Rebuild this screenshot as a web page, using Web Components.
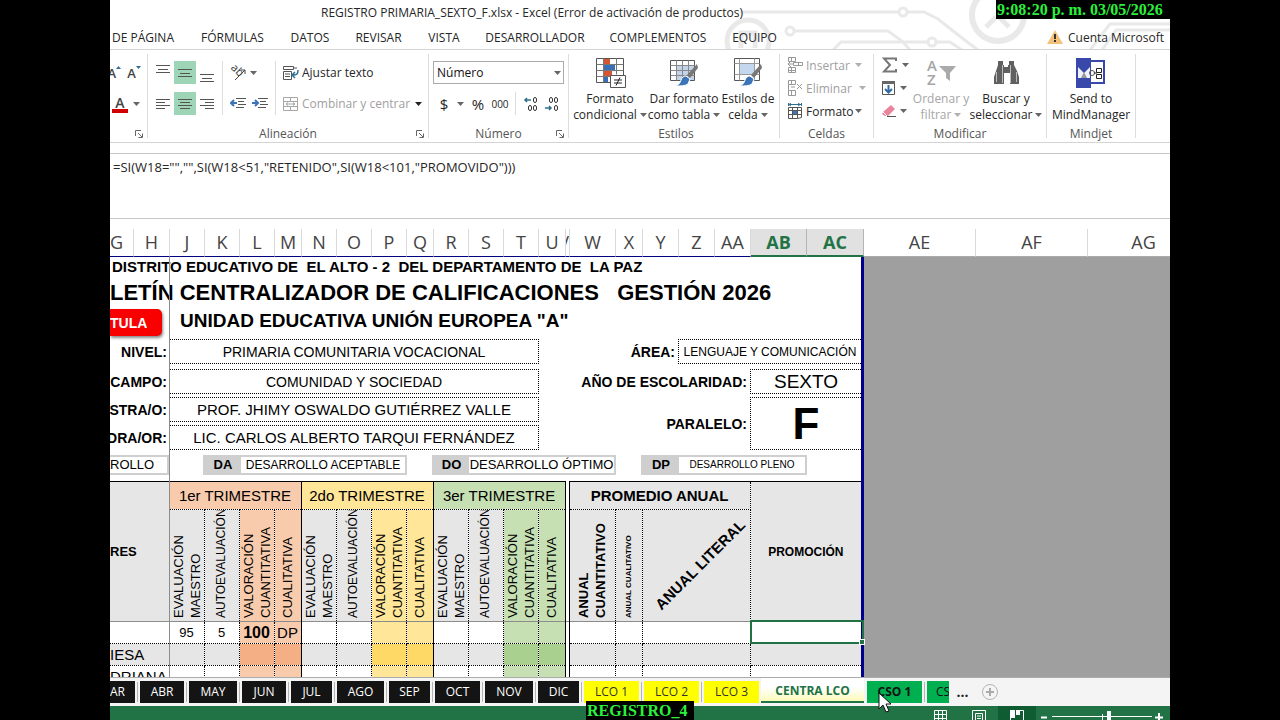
<!DOCTYPE html>
<html lang="es">
<head>
<meta charset="utf-8">
<title>REGISTRO PRIMARIA_SEXTO_F.xlsx - Excel</title>
<style>
  html, body { margin: 0; height: 100%; background: #000; }
  body { font-family: "Open Sans", "Noto Sans", sans-serif; font-size: 12px; color: #262626; }
</style>
</head>
<body>
<excel-app></excel-app>
<script>
const define = (name, html, setup) => {
  const template = document.createElement('template');
  template.innerHTML = '<style>*{box-sizing:border-box}button,select,textarea{font:inherit;color:inherit;border:0;background:none;padding:0;margin:0}a{color:inherit;text-decoration:none}i{font-style:normal}svg{display:block;flex:none}</style>' + html;
  customElements.define(name, class extends HTMLElement {
    constructor() {
      super();
      this.attachShadow({ mode: 'open' }).append(template.content.cloneNode(true));
    }
    connectedCallback() { if (setup) setup(this, this.shadowRoot); }
  });
};

/* ---------- icons ---------- */
const lines = (rows) => rows.map(([x1, x2, y]) => `<path d="M${x1} ${y}.5H${x2}"/>`).join('');
const svg = (w, h, body, extra = '') => `<svg width="${w}" height="${h}" viewBox="0 0 ${w} ${h}" fill="none" stroke="#555" ${extra}>${body}</svg>`;
const brush = '<path d="M29 7L19 18l3 3L30 11z" fill="#777" stroke="none"/><path d="M18 19l4 3-2 5c-3 2-7 2-13 2 4-1 5-3 6-6 1-3 3-4 5-4z" fill="#3b74b9" stroke="#fff"/>';
const zero = (x, y) => `<ellipse cx="${x}" cy="${y}" rx="1.600" ry="2.600" stroke="#333"/>`;
const icons = {
  arrow: svg(7, 4, '<path d="M0 0h7L3.500 4z" fill="#666" stroke="none"/>'),
  arrowdark: svg(7, 4, '<path d="M0 0h7L3.500 4z" fill="#222" stroke="none"/>'),
  arrowoff: svg(7, 4, '<path d="M0 0h7L3.500 4z" fill="#b0b0b0" stroke="none"/>'),
  top: svg(14, 22, lines([[0, 14, 3], [2, 12, 7], [0, 14, 10]])),
  middle: svg(14, 22, lines([[0, 14, 7], [2, 12, 11], [0, 14, 14]])),
  bottom: svg(14, 22, lines([[0, 14, 12], [2, 12, 16], [0, 14, 19]])),
  left: svg(14, 22, lines([[0, 14, 6], [0, 9, 9], [0, 14, 12], [0, 9, 15]])),
  center: svg(14, 22, lines([[0, 14, 6], [2, 12, 9], [0, 14, 12], [2, 12, 15]])),
  right: svg(14, 22, lines([[0, 14, 6], [5, 14, 9], [0, 14, 12], [5, 14, 15]])),
  orient: svg(16, 16, '<g transform="rotate(45 6 6)"><text x="0" y="8" font-size="11" fill="#333" stroke="none">ab</text></g><path d="M5 15L15 5M15 5v4M15 5h-4" stroke="#444"/>'),
  outdent: svg(16, 14, lines([[6, 16, 1], [8, 14, 4], [8, 16, 7], [6, 14, 10]]) + '<path d="M7 6H1M4 3L1 6l3 3" stroke="#3b74b9" stroke-width="2"/>'),
  indent: svg(16, 14, lines([[6, 16, 1], [8, 14, 4], [8, 16, 7], [6, 14, 10]]) + '<path d="M0 6h6M3 3l3 3-3 3" stroke="#3b74b9" stroke-width="2"/>'),
  wrap: svg(16, 16, '<path d="M.5 1.500h10v3H.5zM.5 6.500h8v8H.5zM2 9h5M2 11.500h5M10 3h4"/><path d="M15 5c0 4-1 5-5 5M12 7l-3 3 3 3" stroke="#2f6e8f" stroke-width="1.500"/>'),
  merge: svg(16, 16, '<path d="M.5 1.500h14v13H.5zM.5 5.500h14M.5 10.500h14M7.500 1.500v4M7.500 10.500v4M3 8h9M5 6.500L3 8l2 1.500M10 6.500L12 8l-2 1.500" stroke="#a6a6a6"/>'),
  decplus: svg(16, 16, zero(12, 4) + zero(7, 12) + zero(12, 12) + '<path d="M8 4H2M4 2L2 4l2 2" stroke="#2f6e8f" stroke-width="1.500"/>'),
  decminus: svg(16, 16, zero(7, 4) + zero(12, 4) + zero(12, 12) + '<path d="M1 12h6M5 10l2 2-2 2" stroke="#2f6e8f" stroke-width="1.500"/>'),
  launch: svg(8, 8, '<path d="M.5 6V.5H6M3 3l4 4M7.500 3.500v4h-4" stroke="#666"/>'),
  cond: svg(32, 32, '<path d="M2.500 1.500h27v24h-27z" fill="#fff"/><path d="M10 2h6v5h-6zM10 14h8v5h-8z" fill="#d65532" stroke="none"/><path d="M10 8h11v5H10zM10 20h4v5h-4z" fill="#3b6fb5" stroke="none"/><path d="M2.500 7.500h27M2.500 13.500h27M2.500 19.500h14M9.500 1.500v24M22.500 1.500v16" stroke="#777"/><path d="M16.500 18.500h15v12h-15z" fill="#fff"/><path d="M20 23h8M20 26h8M26 20.500l-4 8" stroke="#222"/>'),
  table: svg(32, 32, '<path d="M2.500 3.500h24v20h-24z" fill="#fff"/><path d="M9 9h17v14H9z" fill="#c3d3ea" stroke="none"/><path d="M2.500 8.500h24M2.500 13.500h24M2.500 18.500h24M8.500 3.500v20M14.500 3.500v20M20.500 3.500v20" stroke="#888"/>' + brush),
  style: svg(32, 32, '<path d="M2.500 1.500h25v22h-25z" fill="#fff"/><path d="M8 7h14v10H8z" fill="#c3d7ee" stroke="none"/><path d="M2.500 6.500h25M2.500 17.500h25M7.500 1.500v22M22.500 1.500v22" stroke="#999"/>' + brush),
  insert: svg(16, 16, '<path d="M1.500.5h7v4h-7zM4.500.5v4M1.500 10.500h7v5h-7zM4.500 10.500v5M1.500 13.500h7M6.500 5.500h9v3h-9zM11.500 5.500v3M1 7h6M4 4L1 7l3 3" stroke="#999"/>'),
  remove: svg(16, 16, '<path d="M1.500.5h7v4h-7zM4.500.5v4M1.500 10.500h7v5h-7zM4.500 10.500v5M1.500 4.500v6M4 7h4M10 4l5 5M15 4l-5 5" stroke="#999"/>'),
  format: svg(16, 16, '<path d="M1.500 4.500h13v10l-4 1h-9zM1.500 7.500h13M1.500 11.500h13M5.500 4.500v11M10.500 4.500v11"/><path d="M6 8h4v3H6z" fill="#3b74b9" stroke="none"/><path d="M1 1.500h13M1.500 0v3M14.500 0v3M4 0L2 1.500 4 3M11 0l2 1.500L11 3" stroke="#2f6e8f"/>'),
  sigma: svg(16, 16, '<path d="M14 4V1.500H2L8 8l-6 6.500h12V12" stroke="#777" stroke-width="2"/>'),
  fill: svg(16, 16, '<path d="M1.500 1.500h12v13h-12z" fill="#fff"/><path d="M1 1h13v3H1z" fill="#666" stroke="none"/><path d="M7.500 5v7M4 9l3.500 3.500L11 9" stroke="#2f6ca5" stroke-width="2"/>'),
  erase: svg(16, 16, '<path d="M2 9l8-7 4 4-7 7H4L1 11z" fill="#e8849b" stroke="none"/><path d="M2 9l4 4" stroke="#fff"/><path d="M6 13.500h9"/>'),
  sort: svg(32, 32, '<path d="M14 9h17l-6 7v8l-4-3v-5z" fill="#aaa" stroke="none"/><text x="2" y="14" font-size="15" font-weight="600" fill="#a6a6a6" stroke="none">A</text><text x="2" y="28" font-size="15" font-weight="600" fill="#a6a6a6" stroke="none">Z</text>'),
  find: svg(32, 32, '<path d="M8 4h5v4h1v2h4V8h1V4h5v4l3 6 2 6v7h-9V16h-6v11H4v-7l2-6 2-6z" fill="#606060" stroke="none"/><path d="M12.500 8v18M20.500 8v18M6.500 15v10M26.500 15v10" stroke="#bbb"/>'),
  mind: svg(32, 32, '<path d="M14 4h15v22H14z" fill="#fff" stroke="#3949ab" stroke-width="2"/><path d="M1 1h15v30H1z" fill="#3949ab" stroke="none"/><path d="M3 10l6 6v5H3zM15 10l-6 6v5h6z" fill="#eef1ff" stroke="none"/><path d="M9 15l-3 6h6z" fill="#999" stroke="none"/><circle cx="17" cy="16" r="2.500"/><path d="M21.500 11.500h5v4h-5zM21.500 17.500h5v4h-5zM19 16h3" stroke="#222"/>'),
  warn: svg(16, 15, '<path d="M8 0l8 14H0z" fill="#f3c179" stroke="none"/><path d="M8 4v5M8 10v2" stroke="#333" stroke-width="2"/>'),
  gridview: svg(14, 14, '<path d="M.5.5h12v13M.5.5v13M4.500.5v13M8.500.5v13M.5 4.500h12M.5 8.500h12M.5 12.500h12" stroke="#fff"/>'),
  pageview: svg(14, 14, '<path d="M.5 14V.5h13V14M3.500 14V3.500h7V14M5 6h4M5 8.500h4M5 11h4" stroke="#fff"/>'),
  breakview: svg(14, 14, '<path d="M0 0h5v8H0zM6 0h4v5H6z" fill="#fff" stroke="none"/><path d="M.5 13.500V8M10 .5h3.500v13H.5" stroke="#fff"/>'),
  plus: svg(16, 16, '<circle cx="8" cy="8" r="7.500" stroke="#b4b4b4"/><path d="M8 4v8M4 8h8" stroke="#aaa" stroke-width="2"/>'),
  pointer: svg(14, 22, '<path d="M1 1v16l4-4 3 7 3-1-3-7h5z" fill="#fff" stroke="#111"/>')
};
const drawIcons = (host, root) => root.querySelectorAll('i[name]').forEach(n => { n.innerHTML = icons[n.getAttribute('name')]; });

/* ---------- application frame ---------- */
define('excel-app', `
<style>
  :host { display: flex; flex-direction: column; height: 100vh; margin: 0 110px; background: #fff; position: relative; overflow: hidden; }
  sheet-view { flex: 1; min-height: 0; }
  screen-note { position: absolute; }
  .clock { right: 0; top: 0; width: 174px; }
  .name { left: 476px; bottom: 0; width: 108px; }
  mouse-pointer { position: absolute; left: 768px; bottom: 6px; }
</style>
<title-area></title-area>
<ribbon-bar></ribbon-bar>
<formula-bar></formula-bar>
<column-heads></column-heads>
<sheet-view></sheet-view>
<sheet-tabs></sheet-tabs>
<status-bar></status-bar>
<screen-note class="clock">9:08:20 p. m. 03/05/2026</screen-note>
<screen-note class="name">REGISTRO_4</screen-note>
<mouse-pointer></mouse-pointer>`);

define('screen-note', `
<style>
  :host { display: block; background: #000; color: #2bf03c; font: bold 16px/19px "Liberation Serif", serif; padding-left: 1px; height: 19px; white-space: nowrap; }
</style><slot></slot>`);

define('mouse-pointer', `<style>:host{display:block}</style><i name="pointer"></i>`, drawIcons);

/* ---------- title and ribbon tabs ---------- */
define('title-area', `
<style>
  :host { display: block; position: relative; height: 50px; border-bottom: 1px solid #d4d4d4; overflow: hidden; flex: none; }
  .art { position: absolute; right: 0; top: 0; }
  .title { position: relative; height: 25px; line-height: 26px; margin-left: 202px; width: 440px; text-align: center; white-space: nowrap; }
  nav { position: relative; display: flex; height: 24px; line-height: 25px; }
  nav a { flex: none; text-align: center; white-space: nowrap; }
  nav a:first-child { display: flex; justify-content: flex-end; padding-right: 13px; }
  nav .account { display: flex; align-items: center; gap: 5px; margin-left: auto; padding-right: 6px; }
</style>
<svg class="art" width="460" height="49" viewBox="710 0 460 49" fill="none" stroke="#e9e9e9" stroke-width="3">
  <path d="M740 12H899M908 12h16l14 7 24 19 16 12M795 31h93l14 10 8 9M833 50l8-8h87M936 42h14l12 8M1090 50l20-26h60M1102 50l14-20h54"/>
  <circle cx="903" cy="12" r="4"/><circle cx="790" cy="31" r="4"/><circle cx="932" cy="42" r="4"/>
  <circle cx="748" cy="41" r="21" stroke-width="5"/><path d="M741 48V33h14v15" stroke-width="5"/>
  <circle cx="998" cy="15" r="26" stroke-width="6"/><path d="M986 27l10-10M1000 18l9 9M1004 10l10-10" stroke-width="5"/>
</svg>
<div class="title">REGISTRO PRIMARIA_SEXTO_F.xlsx - Excel (Error de activación de productos)</div>
<nav>
  <a href="#" style="width:77px">O DE PÁGINA</a><a href="#" style="width:91px">FÓRMULAS</a><a href="#" style="width:64px">DATOS</a><a href="#" style="width:73px">REVISAR</a><a href="#" style="width:58px">VISTA</a><a href="#" style="width:124px">DESARROLLADOR</a><a href="#" style="width:122px">COMPLEMENTOS</a><a href="#" style="width:71px">EQUIPO</a>
  <a href="#" class="account"><i name="warn"></i><span>Cuenta Microsoft</span></a>
</nav>`, drawIcons);

/* ---------- ribbon ---------- */
define('ribbon-group', `
<style>
  :host { display: flex; flex-direction: column; flex: none; border-right: 1px solid #dcdcdc; height: 84px; position: relative; }
  .body { display: flex; height: 72px; flex: none; }
  footer { text-align: center; line-height: 16px; color: #555; white-space: nowrap; flex: none; }
  .launch { position: absolute; right: 4px; bottom: 0; display: none; }
  :host([launcher]) .launch { display: block; }
</style>
<div class="body"><slot></slot></div><footer></footer><button class="launch" aria-label="Más opciones"><i name="launch"></i></button>`,
(host, root) => { root.querySelector('footer').textContent = host.getAttribute('label'); drawIcons(host, root); });

define('big-button', `
<style>
  :host { display: block; flex: none; padding-top: 3px; }
  :host([off]) button { color: #a6a6a6; }
  button { width: 100%; display: flex; flex-direction: column; align-items: center; line-height: 16px; white-space: nowrap; }
  i { display: block; }
  span { display: flex; align-items: center; gap: 3px; }
  .pic { height: 34px; }
</style>
<button><i class="pic"></i><span class="one"></span><span><b style="font-weight:inherit" class="two"></b><i class="arr"></i></span></button>`,
(host, root) => {
  const [one, two] = host.getAttribute('label').split('|');
  root.querySelector('.pic').innerHTML = icons[host.getAttribute('icon')];
  root.querySelector('.one').textContent = one;
  root.querySelector('.two').textContent = two;
  if (host.hasAttribute('menu')) root.querySelector('.arr').innerHTML = icons[host.hasAttribute('off') ? 'arrowoff' : 'arrow'];
  else root.querySelector('.arr').remove();
});

define('ribbon-bar', `
<style>
  :host { display: flex; flex: none; height: 93px; padding-top: 4px; border-bottom: 1px solid #d4d4d4; }
  .two { display: grid; grid-template-rows: 23px 23px; row-gap: 8px; padding-top: 7px; flex: none; }
  .row { display: flex; align-items: center; }
  .bar { width: 1px; height: 54px; margin-top: 7px; background: #dcdcdc; flex: none; }
  button { display: flex; align-items: center; justify-content: center; height: 23px; width: 22px; flex: none; white-space: nowrap; }
  .on { background: #9fd5b7; }
  .text { width: auto; justify-content: flex-start; gap: 3px; }
  .off { color: #a0a0a0; }
  .three { display: grid; grid-template-rows: repeat(3, 23px); }
  .three .row { height: 22px; }
  .pick { position: relative; }
  .pick i { position: absolute; right: 4px; top: 10px; }
  select { appearance: none; width: 131px; height: 23px; border: 1px solid #ababab; padding-left: 3px; background: #fff; color: #111; }
  .font { position: relative; color: #444; font-size: 14px; }
  .font b { font-weight: 600; font-size: 13px; }
  .tip { align-self: flex-start; margin-top: 5px; }
  .red { border-bottom: 4px solid #d00000; line-height: 15px; height: 18px; width: 16px; text-align: center; font-weight: 600; }
</style>
<ribbon-group label="" launcher style="width:38px">
  <div class="two font">
    <div class="row"><button style="width:11px;justify-content:flex-end"><b style="width:6px;display:flex;justify-content:flex-end">A</b><svg class="tip" width="5" height="4"><path d="M0 3h5L2.500 0z" fill="#2f6e8f"/></svg></button><button style="width:26px"><b>A</b><svg class="tip" width="5" height="4"><path d="M0 0h5L2.500 3z" fill="#2f6e8f"/></svg></button></div>
    <div class="row" style="padding-left:2px"><button style="width:16px"><span class="red">A</span></button><button style="width:16px" aria-label="Color"><i name="arrow"></i></button></div>
  </div>
</ribbon-group>
<ribbon-group label="Alineación" launcher style="width:281px">
  <div class="two" style="width:74px;padding-left:4px">
    <div class="row"><button aria-label="Arriba"><i name="top"></i></button><button class="on" aria-label="Medio"><i name="middle"></i></button><button aria-label="Abajo"><i name="bottom"></i></button></div>
    <div class="row"><button aria-label="Izquierda"><i name="left"></i></button><button class="on" aria-label="Centro"><i name="center"></i></button><button aria-label="Derecha"><i name="right"></i></button></div>
  </div>
  <div class="bar"></div>
  <div class="two" style="width:52px;padding-left:4px">
    <div class="row"><button aria-label="Orientación"><i name="orient"></i></button><button style="width:8px" aria-label="Más"><i name="arrow"></i></button></div>
    <div class="row"><button aria-label="Disminuir sangría"><i name="outdent"></i></button><button aria-label="Aumentar sangría"><i name="indent"></i></button></div>
  </div>
  <div class="bar"></div>
  <div class="two" style="padding-left:7px">
    <div class="row"><button class="text"><i name="wrap"></i>Ajustar texto</button></div>
    <div class="row"><button class="text off" style="width:129px"><i name="merge"></i>Combinar y centrar</button><button style="width:12px" aria-label="Más"><i name="arrowdark"></i></button></div>
  </div>
</ribbon-group>
<ribbon-group label="Número" launcher style="width:140px">
  <div class="two" style="padding-left:4px">
    <div class="row pick"><select aria-label="Formato de número"><option>Número</option></select><i name="arrow"></i></div>
    <div class="row"><button style="font-size:15px">$</button><button style="width:10px" aria-label="Más"><i name="arrow"></i></button><button style="width:26px;font-size:15px">%</button><button style="width:18px;font-size:10px">000</button>
      <div style="width:1px;height:23px;background:#dcdcdc;margin:0 6px"></div><button style="width:17px" aria-label="Aumentar decimales"><i name="decplus"></i></button><button style="width:26px" aria-label="Disminuir decimales"><i name="decminus"></i></button></div>
  </div>
</ribbon-group>
<ribbon-group label="Estilos" style="width:211px;padding-left:4px">
  <big-button icon="cond" label="Formato|condicional" menu style="width:74px"></big-button><big-button icon="table" label="Dar formato|como tabla" menu style="width:74px"></big-button><big-button icon="style" label="Estilos de|celda" menu style="width:54px"></big-button>
</ribbon-group>
<ribbon-group label="Celdas" style="width:94px">
  <div class="three" style="padding-left:7px">
    <div class="row"><button class="text off" style="width:68px"><i name="insert"></i>Insertar</button><i name="arrowoff"></i></div>
    <div class="row"><button class="text off" style="width:72px"><i name="remove"></i>Eliminar</button><i name="arrowoff"></i></div>
    <div class="row"><button class="text" style="width:68px"><i name="format"></i>Formato</button><i name="arrow"></i></div>
  </div>
</ribbon-group>
<ribbon-group label="Modificar" style="width:173px">
  <div class="three" style="padding-left:4px;width:37px">
    <div class="row"><button style="width:24px" aria-label="Autosuma"><i name="sigma"></i></button><i name="arrow"></i></div>
    <div class="row"><button style="width:22px" aria-label="Rellenar"><i name="fill"></i></button><i name="arrow"></i></div>
    <div class="row"><button style="width:22px" aria-label="Borrar"><i name="erase"></i></button><i name="arrow"></i></div>
  </div>
  <big-button icon="sort" label="Ordenar y|filtrar" menu off style="width:60px"></big-button><big-button icon="find" label="Buscar y|seleccionar" menu style="width:70px"></big-button>
</ribbon-group>
<ribbon-group label="Mindjet" style="width:89px">
  <big-button icon="mind" label="Send to|MindManager" style="width:88px"></big-button>
</ribbon-group>`, drawIcons);

define('formula-bar', `
<style>
  :host { display: block; flex: none; margin-top: 10px; height: 66px; border: solid #c6c6c6; border-width: 1px 0; font-size: 13px; }
  textarea { display: block; width: 100%; height: 100%; resize: none; outline: 0; padding: 4px 3px; line-height: 18px; overflow: hidden; }
</style>
<textarea aria-label="Barra de fórmulas" spellcheck="false">=SI(W18="","",SI(W18&lt;51,"RETENIDO",SI(W18&lt;101,"PROMOVIDO")))</textarea>`);

/* ---------- column headings ---------- */
define('column-heads', `
<style>
  :host { display: flex; flex: none; height: 28px; margin-top: 10px; overflow: hidden; font-size: 18px; line-height: 27px; color: #444; }
  div { flex: none; text-align: center; overflow: hidden; display: flex; justify-content: center; border-right: 1px solid #dadada; border-bottom: 1px solid #000080; }
  .sel { background: #e1e1e1; color: #217346; font-weight: 700; border-right-color: #b5b5b5; border-bottom: 2px solid #217346; }
  .out { border-bottom-color: #ababab; }
</style>`, (host, root) => {
  const cols = [['G', 24, 'justify-content:flex-start'], ['H', 36], ['J', 35], ['K', 35], ['L', 35], ['M', 27], ['N', 35], ['O', 35], ['P', 35], ['Q', 27], ['R', 35], ['S', 35], ['T', 35], ['U', 27], ['V', 4, 'justify-content:flex-end'], ['W', 46], ['X', 27], ['Y', 36], ['Z', 36], ['AA', 36], ['AB', 56], ['AC', 57], ['AE', 112], ['AF', 112], ['AG', 112]];
  cols.forEach(([name, w, css]) => {
    const d = document.createElement('div');
    d.textContent = name;
    d.style.cssText = 'width:' + w + 'px;' + (css || '');
    if (name === 'AB' || name === 'AC') d.className = 'sel';
    if (/A[EFG]/.test(name)) d.className = 'out';
    root.append(d);
  });
});

/* ---------- worksheet ---------- */
define('sheet-view', `
<style>
  :host { display: flex; background: #9f9f9f; overflow: hidden; position: relative; border-bottom: 1px solid #ababab; color: #000; font-family: "Liberation Sans", Arial, sans-serif; }
  .freeze { position: absolute; left: 59px; top: 0; bottom: 0; width: 1px; background: #8c8c8c; }
  .doc { width: 754px; flex: none; background: #fff; border-right: 3px solid #00008f; border-top: 1px solid #00008f; margin-top: -1px; }
  h1, h2, h3 { margin: 0; white-space: pre; }
  h3 { font-size: 15px; line-height: 20px; padding-left: 2px; }
  h1 { font-size: 22px; line-height: 32px; }
  .school { display: flex; height: 30px; }
  .school h2 { font-size: 19px; line-height: 23px; margin-left: 18px; }
  .school button { width: 52px; height: 27px; background: #f90000; color: #fff; font-weight: bold; font-size: 14px; text-align: left; border-radius: 0 5px 5px 0; box-shadow: 1px 2px 3px #888; }
  .info { display: grid; grid-template-columns: 60px 369px 139px 72px 111px; grid-template-rows: 27px 25px 25px 25px; row-gap: 3px; line-height: 24px; font-size: 14px; white-space: nowrap; }
  .info b { display: flex; justify-content: flex-end; align-items: center; padding-right: 3px; height: 25px; }
  .info span { border: 1px dotted #000; height: 25px; display: flex; align-items: center; justify-content: center; }
  .info .left { border-left: 0; } .info .box { border-right: 0; }
  .info .person { font-size: 15px; }
  .legend { display: flex; margin: 5px 0 6px; font-size: 13px; height: 20px; line-height: 16px; white-space: nowrap; }
  .legend div { display: flex; flex: none; border: 2px solid #cfcfcf; }
  .legend b { background: #cfcfcf; width: 36px; text-align: center; flex: none; }
  .legend span { flex: 1; display: flex; justify-content: center; }
  table { border-collapse: collapse; table-layout: fixed; width: 751px; }
  th, td { padding: 0; border: 1px dotted #000; font-weight: normal; text-align: center; overflow: hidden; font-size: 15px; line-height: 20px; white-space: nowrap; }
  th { background: #e6e6e6; border-top: 1px solid #000; }
  .names { font-weight: bold; font-size: 13px; text-align: left; border-left: 0; }
  tbody td:first-child { text-align: left; border-left: 0; }
  thead tr:first-child { height: 28px; } .heads { height: 112px; } tbody tr { height: 22px; }
  .heads th { border-top: 1px dotted #000; vertical-align: bottom; font-size: 13px; line-height: 17px; }
  .v { writing-mode: vertical-rl; transform: rotate(180deg); text-align: left; height: 110px; padding-top: 3px; margin: 0 auto; white-space: pre; }
  .auto { font-size: 12px; }
  .strong { font-weight: bold; }
  .tiny { font-weight: bold; font-size: 8px; }
  .diag { transform: rotate(-45deg); font-weight: bold; font-size: 15px; height: 20px; margin-bottom: 41px; }
  .o { background: #f8cbad; } .y { background: #ffe699; } .g { background: #c6e0b4; }
  .even td { background: #e6e6e6; } .even .o { background: #f4b084; } .even .y { background: #ffd966; } .even .g { background: #a9d08e; }
  .s { border-right: 1px solid #000; }
  table .gap { border-top: 0; border-bottom: 0; background: #fff; border-left: 1px solid #000; border-right: 1px solid #000; }
  tbody tr:first-child td { border-top: 1px solid #8c8c8c; }
  td.n { font-size: 13px; } td.total { font-weight: bold; font-size: 16px; }
  th.end, td.end { border-right: 0; }
  td.side, th.side { border-right: 1px solid #8c8c8c; }
  .pick { position: relative; overflow: visible; }
  .pick i { position: absolute; inset: -2px -3px -1px -1px; border: 2px solid #217346; }
  .pick i::after { content: ""; position: absolute; right: -3px; bottom: -3px; width: 6px; height: 6px; background: #217346; border: 1px solid #fff; box-sizing: border-box; }
</style>
<div class="doc">
  <h3>DISTRITO EDUCATIVO DE  EL ALTO - 2  DEL DEPARTAMENTO DE  LA PAZ</h3>
  <h1>LETÍN CENTRALIZADOR DE CALIFICACIONES   GESTIÓN 2026</h1>
  <div class="school"><button>TULA</button><h2>UNIDAD EDUCATIVA UNIÓN EUROPEA "A"</h2></div>
  <div class="info">
    <b>NIVEL:</b><span class="left">PRIMARIA COMUNITARIA VOCACIONAL</span><b>ÁREA:</b><span class="box" style="grid-column:span 2;font-size:12px">LENGUAJE Y COMUNICACIÓN</span>
    <b>CAMPO:</b><span class="left">COMUNIDAD Y SOCIEDAD</span><b style="grid-column:span 2">AÑO DE ESCOLARIDAD:</b><span class="box" style="font-size:19px">SEXTO</span>
    <b>STRA/O:</b><span class="left person">PROF. JHIMY OSWALDO GUTIÉRREZ VALLE</span><b style="grid-area:3/3/5/5;height:auto">PARALELO:</b><span class="box" style="grid-area:3/5/5/6;height:auto;font-size:44px;font-weight:bold">F</span>
    <b>DRA/OR:</b><span class="left person">LIC. CARLOS ALBERTO TARQUI FERNÁNDEZ</span>
  </div>
  <div class="legend">
    <div style="width:59px;margin-right:34px;border-left:0"><span style="justify-content:flex-start">ROLLO</span></div>
    <div style="width:204px;margin-right:25px"><b>DA</b><span style="font-size:12px">DESARROLLO ACEPTABLE</span></div>
    <div style="width:184px;margin-right:25px"><b style="width:35px">DO</b><span>DESARROLLO ÓPTIMO</span></div>
    <div style="width:166px"><b>DP</b><span style="font-size:10px">DESARROLLO PLENO</span></div>
  </div>
  <table></table>
</div>
<div class="freeze"></div>`, (host, root) => {
  const kinds = ['o', 'y', 'g'];
  const widths = [59, ...kinds.flatMap(() => [35, 35, 35, 27]), 4, 46, 27, 108, 111];
  const heads = kinds.map(k => `<th><div class="v">EVALUACIÓN\nMAESTRO</div></th><th><div class="v auto">AUTOEVALUACIÓN</div></th><th class="${k}"><div class="v">VALORACIÓN\nCUANTITATIVA</div></th><th class="${k} s"><div class="v">CUALITATIVA</div></th>`).join('');
  const row = (cls, name, vals, picked) => `<tr class="${cls}"><td class="side">${name}</td>` +
    kinds.map((k, i) => { const v = i ? ['', '', '', ''] : vals; return `<td class="n">${v[0]}</td><td class="n">${v[1]}</td><td class="${k} total">${v[2]}</td><td class="${k} s">${v[3]}</td>`; }).join('') +
    `<td class="gap"></td><td></td><td></td><td></td><td class="end ${picked ? 'pick' : ''}">${picked ? '<i></i>' : ''}</td></tr>`;
  root.querySelector('table').innerHTML =
    '<colgroup>' + widths.map(w => `<col style="width:${w}px">`).join('') + '</colgroup><thead><tr>' +
    '<th rowspan="2" class="names side">RES</th><th colspan="4" class="o s">1er TRIMESTRE</th><th colspan="4" class="y s">2do TRIMESTRE</th><th colspan="4" class="g s">3er TRIMESTRE</th><th rowspan="2" class="gap"></th><th colspan="3" style="font-weight:bold;line-height:26px">PROMEDIO ANUAL</th><th rowspan="2" class="end" style="font-weight:bold;font-size:12px">PROMOCIÓN</th></tr>' +
    `<tr class="heads">${heads}<th><div class="v strong">ANUAL\nCUANTITATIVO</div></th><th><div class="v tiny">ANUAL CUALITATIVO</div></th><th><div class="diag">ANUAL LITERAL</div></th></tr></thead><tbody>` +
    row('', '', ['95', '5', '100', 'DP'], true) + row('even', 'IESA', ['', '', '', '']) + row('', 'DRIANA', ['', '', '', '']) + '</tbody>';
});

/* ---------- sheet tabs ---------- */
define('sheet-tabs', `
<style>
  :host { display: flex; flex: none; height: 28px; background: #f4f4f4; }
  button { flex: none; height: 22px; margin-top: 3px; line-height: 20px; background: #141414; color: #fff; white-space: nowrap; overflow: hidden; }
  hr { flex: none; width: 1px; height: 20px; margin: 4px 2px; border: 0; background: #b4b4b4; }
  .yellow { background: #ffff00; color: #333; }
  .green { background: #00b050; color: #111; }
  .now { width: 103px; height: 25px; margin: 0 3px 0 -3px; background: linear-gradient(#fff 40%, #fdfbb8); color: #217346; font-weight: 700; border-bottom: 2px solid #217346; line-height: 25px; }
  .more { background: none; color: #222; font-weight: 700; width: 17px; margin-left: 5px; font-size: 14px; line-height: 18px; }
  .add { background: none; margin-left: 11px; display: flex; align-items: center; }
</style>`, (host, root) => {
  const tabs = [['AR', 25, 'text-align:left'], ['ABR', 44], ['MAY', 48], ['JUN', 44], ['JUL', 41], ['AGO', 47], ['SEP', 41], ['OCT', 45], ['NOV', 48], ['DIC', 41], ['LCO 1', 55], ['LCO 2', 55], ['LCO 3', 55]];
  root.innerHTML += tabs.map(([t, w, css]) => `<button class="${t[0] === 'L' ? 'yellow' : ''}" style="width:${w}px;${css || ''}">${t}</button><hr>`).join('') +
    '<button class="now">CENTRA LCO</button><button class="green" style="width:55px;font-weight:700">CSO 1</button><hr><button class="green" style="width:22px;padding-left:9px;text-align:left">CS</button><button class="more">...</button><button class="add" aria-label="Hoja nueva"><i name="plus"></i></button>';
  drawIcons(host, root);
});

define('status-bar', `
<style>
  :host { display: flex; flex: none; height: 14px; background: #217346; justify-content: flex-end; overflow: hidden; }
  button { width: 38px; height: 18px; padding-top: 4px; display: flex; justify-content: center; flex: none; }
  .on { background: #0f5c33; }
  .zoom { display: flex; padding: 4px 5px 0 5px; height: 14px; }
</style>
<button aria-label="Normal"><i name="gridview"></i></button><button aria-label="Diseño de página"><i name="pageview"></i></button><button class="on" aria-label="Salto de página"><i name="breakview"></i></button>
<div class="zoom"><svg width="124" height="12" fill="none" stroke="#fff"><path d="M0 7.500h6M114 7.500h8M118 3v9" stroke-width="2"/><path d="M11 6.500h100M61.500 4v6"/><path d="M66 1h4v11h-4z" fill="#fff" stroke="none"/></svg></div>`, drawIcons);
</script>
</body>
</html>
